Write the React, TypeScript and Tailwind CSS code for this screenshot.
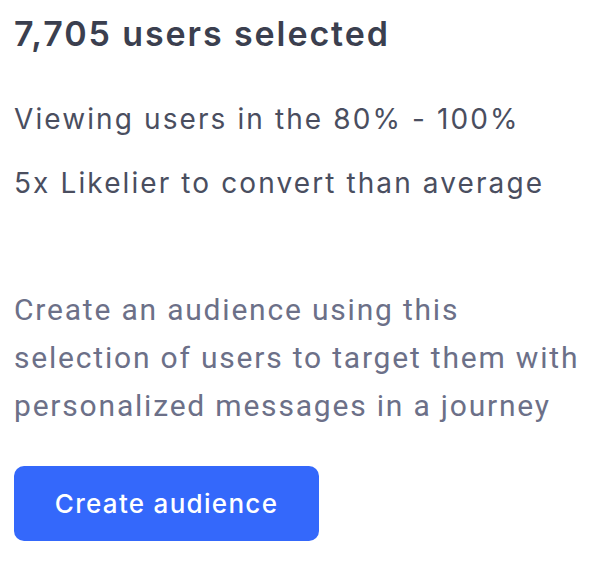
export default function App() {
  return (
    <div className="min-h-screen bg-white px-[14px] pt-[12px]">
      <h1 className="font-['Inter',sans-serif] text-[34px] font-semibold leading-[44px] tracking-[1.9px] text-[#3b3f4f]">
        7,705 users selected
      </h1>
      <div className="mt-[40px] flex flex-col gap-[18px] font-['Inter',sans-serif] text-[28px] leading-[46px] tracking-[2.1px] text-[#4a4e5f]">
        <p>Viewing users in the 80% - 100%</p>
        <p>5x Likelier to convert than average</p>
      </div>
      <p className="mt-[80px] font-['Roboto',sans-serif] text-[30px] leading-[48px] tracking-[1.8px] text-[#6c7088]">
        Create an audience using this
        <br />
        selection of users to target them with
        <br />
        personalized messages in a journey
      </p>
      <button className="mt-[36px] flex h-[75px] w-[305px] items-center justify-center rounded-[10px] bg-[#3468fb] font-['Inter',sans-serif] text-[26px] font-medium tracking-[1.3px] text-white">
        Create audience
      </button>
    </div>
  )
}
